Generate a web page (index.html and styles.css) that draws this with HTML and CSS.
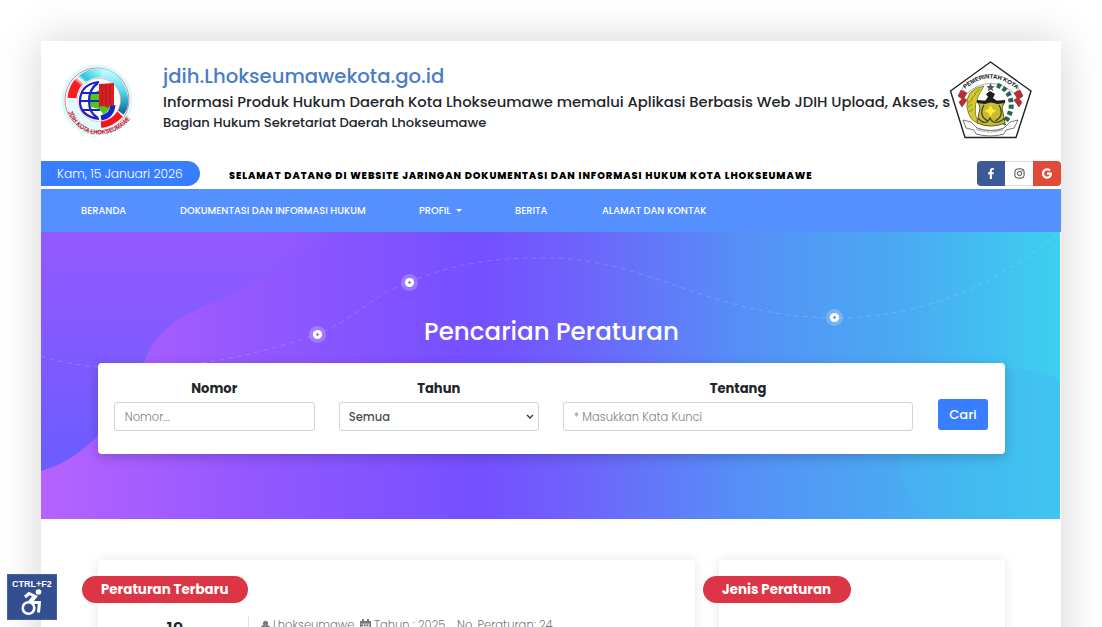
FILE: index.html
```
<!DOCTYPE html>
<html lang="id">
<head>
<meta charset="utf-8">
<title>JDIH Kota Lhokseumawe</title>
<link rel="stylesheet" href="styles.css">
</head>
<body>
<div class="page">
  <header class="header">
    <svg class="logo" viewBox="0 0 85 90">
      <defs>
        <linearGradient id="ringTop" x1="0" y1="1" x2="1" y2="0"><stop offset="0" stop-color="#f51d23"/><stop offset=".38" stop-color="#f51d23"/><stop offset=".5" stop-color="#fff"/><stop offset=".6" stop-color="#25c6dc"/><stop offset="1" stop-color="#9df4fc"/></linearGradient>
        <linearGradient id="ringRight" x1="0" y1="0" x2="0" y2="1"><stop offset="0" stop-color="#b6f8ff"/><stop offset=".45" stop-color="#54dcef"/><stop offset="1" stop-color="#0f6f98"/></linearGradient>
        <path id="jdihArc" d="M13 57Q23 79 43 79.500Q65 79 78 61"/>
      </defs>
      <circle cx="42" cy="45" r="34" fill="none" stroke="#d5fcff" stroke-width="3"/>
      <circle cx="42" cy="45" r="32" fill="none" stroke="#ef7b84" stroke-width="1"/>
      <circle cx="42" cy="45" r="26" fill="none" stroke="#e3fbff" stroke-width="10"/>
      <path d="M17 43Q18 31 27 24T47 18" fill="none" stroke="url(#ringTop)" stroke-width="9"/>
      <path d="M46 18Q60 20 66 34T65 57" fill="none" stroke="url(#ringRight)" stroke-width="9"/>
      <path d="M65 59Q56 68 46 69" fill="none" stroke="#f1141d" stroke-width="8"/>
      <circle cx="44" cy="45" r="21.500" fill="#fff" stroke="#ff9ca2" stroke-width=".7"/>
      <path d="M33 41l11-6 11 3 2 13-8 9-5-6-8-2z" fill="#50c51c"/>
      <g fill="none" stroke="#1824c8" stroke-width="2.200"><path d="M44 27Q26 29 25 45T44 64M43 28Q34 34 34 46T43 63M27 38h18M25 46h20M28 55h17"/><path d="M58 50Q57 61 46 63" stroke-width="5"/></g>
      <path d="M44 29l15-1v23l-4-1-2 3-4-2-5 1z" fill="#d91f24"/>
      <path d="M47 30v20M51 29v21M55 29v20" stroke="#8e1715" stroke-width=".7"/>
      <text class="logo-text"><textPath href="#jdihArc" startOffset="0" textLength="77" lengthAdjust="spacingAndGlyphs">JDIH KOTA LHOKSEUMAWE</textPath></text>
    </svg>
    <div class="identity">
      <h1 class="site-name">jdih.Lhokseumawekota.go.id</h1>
      <p class="tagline">Informasi Produk Hukum Daerah Kota Lhokseumawe memalui Aplikasi Berbasis Web JDIH Upload, Akses, s</p>
      <p class="division">Bagian Hukum Sekretariat Daerah Lhokseumawe</p>
    </div>
    <svg class="crest" viewBox="0 0 90 90">
      <defs><path id="crestArc" d="M20 34Q45 13 71 34"/><path id="ribbonArc" d="M31 75Q45 80 60 75"/></defs>
      <path d="M45.500 7L86 36 71 82.500H20L5.500 36Z" fill="#fff" stroke="#222" stroke-width="1.400"/>
      <path d="M17 33Q45 6 74 33L70 39Q45 18 21 39Z" fill="#fff" stroke="#777" stroke-width=".6"/>
      <text class="crest-text"><textPath href="#crestArc" startOffset="0" textLength="57">PEMERINTAH KOTA</textPath></text>
      <path d="M16 35l6 3-3 5 3 2-5 7-3-5 3-3-4-3zM75 35l-6 3 3 5-3 2 5 7 3-5-3-3 4-3z" fill="#c32932" stroke="#333" stroke-width=".5"/>
      <path d="M39 31Q20 34 22 52Q24 66 33 68Q25 50 39 31Z" fill="#d5c92e" stroke="#6e751c" stroke-width=".8"/>
      <path d="M35 34l-6 5M31 39l-5 5M28 44l-5 4M27 49l-4 3M28 54l-4 3" stroke="#7f7d19" stroke-width=".8"/>
      <path d="M52 30Q68 36 66 54Q64 63 58 69" fill="none" stroke="#286653" stroke-width="5" stroke-dasharray="4 2.500"/>
      <path d="M33 46h27l-3 7 3 15q-14 6-28 0l3-15z" fill="#c9ba35" stroke="#635b1b"/>
      <path d="M39 50q-6 11 4 16M54 50q6 11-4 16M33 63q8 9 12 0q4 9 15 0" fill="none" stroke="#3b4223" stroke-width="1.200"/>
      <path d="M45.500 50l2 4 4 2-4 2-2 4-2-4-4-2 4-2z" fill="#ffef29"/>
      <path d="M45.500 28l1.300 3 3 .2-2.400 2 .8 3-2.700-1.700-2.700 1.700.8-3-2.400-2 3-.2z" fill="#555"/>
      <path d="M32 45l8 1 3-4-2-3 4-3 5 3-2 4 4 3 8-1v3l-8 1q-6-3-12 0l-8-1z" fill="#1d1d1b"/>
      <path d="M18 65l8 2 6 6q14 5 27 0l6-6 8-2-4 8-8 2-2 4q-14 4-28 0l-2-4-8-2z" fill="#fff" stroke="#555" stroke-width=".8"/>
      <text class="ribbon-text"><textPath href="#ribbonArc" textLength="28">LHOKSEUMAWE</textPath></text>
    </svg>
  </header>

  <div class="topbar">
    <div class="today"><span>Kam, 15 Januari 2026</span></div>
    <div class="welcome">SELAMAT DATANG DI WEBSITE JARINGAN DOKUMENTASI DAN INFORMASI HUKUM KOTA LHOKSEUMAWE</div>
    <div class="social">
      <a class="social-link facebook"><svg viewBox="0 0 320 512" width="8" height="11"><path fill="#fff" d="M279 288l14-93h-89v-60c0-25 12-50 52-50h41V6S260 0 225 0c-73 0-121 44-121 125v70H23v93h81v224h100V288z"/></svg></a>
      <a class="social-link instagram"><svg viewBox="0 0 12 12" width="11" height="11" fill="none" stroke="#333" stroke-width="1"><rect x="1" y="1" width="10" height="10" rx="3"/><circle cx="6" cy="6" r="2.300"/><circle cx="8.800" cy="3.200" r=".3"/></svg></a>
      <a class="social-link google"><svg viewBox="0 0 488 512" width="10" height="11"><path fill="#fff" stroke="#fff" stroke-width="20" d="M488 262C488 403 391 504 248 504 111 504 0 393 0 256S111 8 248 8c67 0 123 25 166 65l-67 65C259 53 94 117 94 256c0 87 69 157 154 157 98 0 135-71 141-107H248v-86h236c3 13 4 25 4 42z"/></svg></a>
    </div>
  </div>

  <nav class="nav">
    <a class="nav-item beranda">BERANDA</a>
    <a class="nav-item dokumentasi">DOKUMENTASI DAN INFORMASI HUKUM</a>
    <a class="nav-item profil">PROFIL<i class="caret"></i></a>
    <a class="nav-item berita">BERITA</a>
    <a class="nav-item alamat">ALAMAT DAN KONTAK</a>
  </nav>

  <section class="hero">
    <svg class="hero-art" viewBox="0 0 1019 287">
      <defs>
        <linearGradient id="blob" x1="0" y1="0" x2="0" y2="1"><stop offset="0" stop-color="#9459ff"/><stop offset="1" stop-color="#6b5cff"/></linearGradient>
        <linearGradient id="blobFade" x1="0" y1="0" x2="1" y2="0"><stop offset=".75" stop-color="#fff"/><stop offset="1" stop-color="#000"/></linearGradient>
        <mask id="fade"><rect width="300" height="287" fill="url(#blobFade)"/></mask>
      </defs>
      <path d="M0 0H295C265 20 235 40 200 58C165 75 145 78 124 98C94 127 105 152 70 190C47 215 30 230 0 239Z" fill="url(#blob)" mask="url(#fade)"/>
      <path d="M1019 148C1000 137 970 134 940 139C900 147 860 180 858 220C856 255 872 273 887 287H1019Z" fill="#44b7ef" opacity=".4"/>
      <path d="M0 124C75 148 185 135 276 102C315 87 332 62 368 50C415 31 455 25 510 26C610 28 670 85 794 86C890 86 965 45 1019 0" fill="none" stroke="#fff" stroke-opacity=".17" stroke-dasharray="5 4"/>
      <g fill="#fff"><g fill-opacity=".22"><circle cx="276.500" cy="102.500" r="8.500"/><circle cx="368.500" cy="50.500" r="8.500"/><circle cx="793.500" cy="85.500" r="8.500"/></g><circle cx="276.500" cy="102.500" r="4.600"/><circle cx="368.500" cy="50.500" r="4.600"/><circle cx="793.500" cy="85.500" r="4.600"/></g>
      <g fill="#6266e8"><circle cx="276.500" cy="102.500" r="1.200"/><circle cx="368.500" cy="50.500" r="1.200"/><circle cx="793.500" cy="85.500" r="1.200"/></g>
    </svg>
    <div class="hero-content">
      <h2 class="hero-title"><span>Pencarian Peraturan</span></h2>
      <form class="search">
        <div class="field"><label class="label">Nomor</label><div class="control"><span>Nomor...</span></div></div>
        <div class="field"><label class="label">Tahun</label><div class="control select"><span>Semua</span><svg viewBox="0 0 8 6" width="8" height="6"><path d="M1 1l3 3 3-3" fill="none" stroke="#333" stroke-width="1.300"/></svg></div></div>
        <div class="field wide"><label class="label">Tentang</label><div class="control"><span>* Masukkan Kata Kunci</span></div></div>
        <button class="submit" type="button">Cari</button>
      </form>
    </div>
  </section>

  <main class="content">
    <section class="panel latest">
      <h3 class="badge badge-latest"><span>Peraturan Terbaru</span></h3>
      <div class="entry">
        <div class="entry-day">19</div>
        <div class="entry-meta">
          <svg viewBox="0 0 10 11" width="9" height="11"><circle cx="5" cy="3" r="2.800" fill="#777"/><path d="M0 11V8q0-3 3-3 2 1.500 4 0 3 0 3 3v3z" fill="#777"/></svg>
          <span class="place">Lhokseumawe</span>
          <svg class="calendar" viewBox="0 0 11 12" width="11" height="12"><path d="M0 2h2V0h2v2h3V0h2v2h2v10H0z" fill="#777"/><path d="M1 5h9M1 7.500h9M1 10h9M3.500 5v6M6 5v6M8.500 5v6" stroke="#fff" stroke-width=".6"/></svg>
          <span class="year">Tahun : 2025</span>
          <span class="number">No. Peraturan: 24</span>
        </div>
      </div>
    </section>
    <section class="panel types"><h3 class="badge badge-types"><span>Jenis Peraturan</span></h3></section>
  </main>
</div>
<div class="access">
  <span>CTRL+F2</span>
  <svg viewBox="0 0 22 27" width="22" height="27" fill="none" stroke="#fff" stroke-width="2.600"><circle cx="17.500" cy="3" r="2.800" fill="#fff" stroke="none"/><path d="M4 8l4-3.500 6.500 3-5 6" stroke-width="3"/><path d="M14 7l-5 6" stroke-width="4"/><circle cx="7.500" cy="19" r="5.800"/><path d="M10 13.500h8.500l-1 10" stroke-width="3"/></svg>
</div>
</body>
</html>
```

FILE: styles.css
```
* { box-sizing: border-box; }
html { height: 627px; overflow: hidden; }
body { display: flow-root; margin: 0; height: 627px; overflow: hidden; background: #fff; color: #212529; font-family: Poppins, Inter, "Open Sans", sans-serif; }
h1, h2, h3, p { margin: 0; }
.page { width: 1020px; height: 700px; margin: 41px 0 0 41px; background: #fff; box-shadow: 0 0 41px rgba(0, 0, 0, .18); }

.header { display: flex; height: 120px; padding: 14px 26px 0 14px; }
.logo { flex: none; width: 85px; height: 90px; }
.logo-text { font: 800 6.5px "Liberation Sans", sans-serif; fill: #b51823; }
.identity { flex: none; width: 785px; margin-left: 23px; margin-right: -3px; padding-top: 6px; white-space: nowrap; }
.site-name { font-size: 19.65px; font-weight: 500; line-height: 31px; color: #4a7dc4; }
.tagline { font-size: 14.74px; font-weight: 500; line-height: 21px; }
.division { font-size: 13.1px; font-weight: 500; line-height: 20px; }
.crest { position: relative; flex: none; width: 90px; height: 90px; }
.crest-text { font: 700 6px "Liberation Sans", sans-serif; fill: #222; }
.ribbon-text { font: 3px "Liberation Sans", sans-serif; fill: #333; }

.topbar { display: flex; align-items: flex-start; height: 28px; }
.today { width: 159px; height: 25px; padding-left: 16px; background: #397eff; border-radius: 0 13px 13px 0; color: #fff; font-size: 12.25px; font-weight: 300; line-height: 25px; white-space: nowrap; }
.welcome { width: 748px; padding-left: 29px; color: #000; font-size: 9.8px; font-weight: 800; line-height: 29px; letter-spacing: .91px; white-space: nowrap; }
.social { display: flex; margin-left: auto; width: 84px; height: 25px; border-radius: 4px; overflow: hidden; }
.social-link { display: flex; align-items: center; justify-content: center; width: 28px; height: 25px; }
.facebook { background: #3d5a98; }
.instagram { background: #fff; border: 1px solid #ddd; border-width: 1px 0; }
.google { background: #df4b38; }

.nav { display: flex; align-items: center; height: 43px; padding-left: 40px; background: #5590ff; color: #fff; font-size: 9.8px; font-weight: 500; white-space: nowrap; }
.nav-item { display: flex; align-items: center; }
.beranda { width: 99px; }
.dokumentasi { width: 239px; }
.profil { width: 96px; }
.berita { width: 87px; }
.caret { margin-left: 5px; border: solid transparent; border-width: 3px 3px 0; border-top-color: #fff; }

.hero { position: relative; width: 1019px; height: 287px; background: linear-gradient(90deg, #b663ff 0, #9658ff 19%, #7450ff 43%, #6f61fb 52%, #5590f7 69%, #4ba9f2 84%, #3cd0f0 100%); }
.hero-art { position: absolute; left: 0; top: 0; width: 1019px; height: 287px; }
.hero-content { position: relative; padding: 81px 55px 0 57px; }
.hero-title { height: 50px; color: #fff; font-size: 24.56px; font-weight: 500; line-height: 38px; text-align: center; white-space: nowrap; }
.search { display: flex; gap: 24px; height: 91px; padding: 16px 17px 0 16px; background: #fff; border-radius: 4px; box-shadow: 0 3px 12px rgba(0, 0, 0, .2); }
.field { width: 200.5px; }
.field.wide { width: 350px; }
.label { display: block; height: 23px; line-height: 20px; font-size: 13.1px; font-weight: 700; text-align: center; }
.control { display: flex; align-items: center; height: 29px; padding: 1px 9.8px 0; border: 1px solid #ced4da; border-radius: 3px; color: #7b8289; font-size: 11.5px; font-weight: 300; white-space: nowrap; }
.control.select { justify-content: space-between; padding: 1px 4px 0 9.3px; color: #495057; font-weight: 500; }
.submit { width: 50px; height: 31px; margin: 20px 0 0 auto; padding: 0; border: 0; border-radius: 3px; background: #397eff; color: #fff; font: 500 13.1px/31px Poppins, Inter, sans-serif; }

.content { display: flex; gap: 24px; padding: 41px 56px 0 57px; }
.panel { height: 140px; padding-top: 16px; background: #fff; border-radius: 3px; box-shadow: 0 0 12px rgba(0, 0, 0, .1); }
.latest { width: 597px; }
.types { width: 286px; }
.badge { height: 27px; margin-left: -16px; padding-left: 19px; border-radius: 14px; background: #dc3545; color: #fff; font-size: 13.4px; font-weight: 700; line-height: 27px; white-space: nowrap; }
.badge-latest { width: 166px; }
.badge-types { width: 148px; }
.entry { display: flex; margin-top: 13px; }
.entry-day { width: 151px; padding: 0 0 0 4px; border-right: 1px solid #dee2e6; font-size: 17px; font-weight: 600; line-height: 26px; text-align: center; }
.entry-meta { display: flex; align-items: center; height: 18px; padding-left: 12px; color: #777; font-size: 11.5px; font-weight: 300; white-space: nowrap; }
.place { width: 90px; padding-left: 3px; }
.calendar { margin-right: 3px; }
.year { width: 83px; }

.access { position: fixed; left: 7px; top: 574px; display: flex; flex-direction: column; align-items: center; width: 50px; height: 46px; padding-top: 4px; background: #344f91; border: 1px solid #4563a0; color: #fff; font: 700 9px/10px "Liberation Sans", sans-serif; }
```
